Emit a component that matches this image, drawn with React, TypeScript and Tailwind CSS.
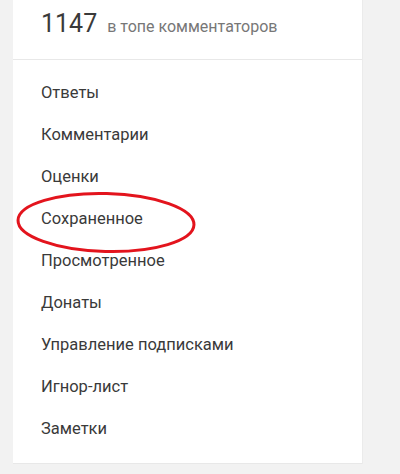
export default function App() {
  const items = [
    "Ответы",
    "Комментарии",
    "Оценки",
    "Сохраненное",
    "Просмотренное",
    "Донаты",
    "Управление подписками",
    "Игнор-лист",
    "Заметки",
  ];

  return (
    <div className="min-h-[474px] bg-[#f2f2f2] pl-[13px] font-['Roboto',sans-serif]">
      <div className="relative w-[350px] bg-white border-r border-[#ebebeb]">
        <div className="flex items-baseline gap-[10px] h-[60px] px-[28px] pt-[9px] border-b border-[#e8e8e8]">
          <span className="text-[25px] leading-[30px] text-[#3a3a3a]">1147</span>
          <span className="text-[16px] leading-[30px] text-[#777]">в топе комментаторов</span>
        </div>
        <ul className="pt-[12px] pb-[13px] border-b border-[#e8e8e8]">
          {items.map((item) => (
            <li key={item} className="px-[28px] text-[16.5px] leading-[42px] text-[#3a3a3a]">
              {item}
            </li>
          ))}
        </ul>
        {/* red annotation around "Сохраненное" */}
        <svg
          className="absolute left-[2px] top-[190px] pointer-events-none"
          width="184"
          height="66"
          viewBox="0 0 184 66"
        >
          <ellipse
            cx="91"
            cy="32.5"
            rx="88"
            ry="29"
            fill="none"
            stroke="#e3141d"
            strokeWidth="3"
            transform="rotate(1.5 91 32.5)"
          />
        </svg>
      </div>
    </div>
  );
}
